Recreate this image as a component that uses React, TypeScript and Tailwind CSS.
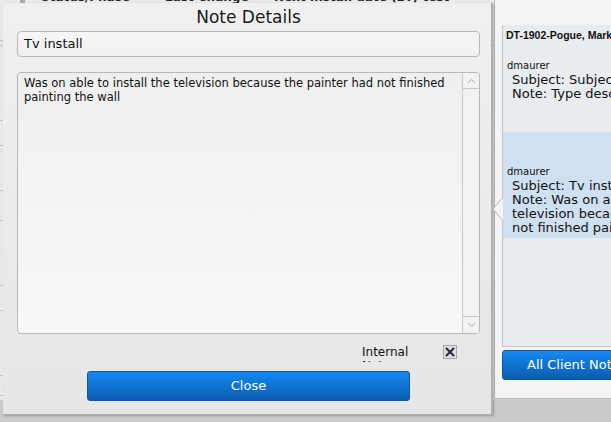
import React from "react";

const font = "font-['DejaVu_Sans','Liberation_Sans',sans-serif]";

const Chevron = ({ up }: { up?: boolean }) => (
  <svg width="9" height="6" viewBox="0 0 9 6" className="text-[#a8a8a8]">
    <path
      d={up ? "M1 5 L4.5 1.5 L8 5" : "M1 1 L4.5 4.5 L8 1"}
      fill="none"
      stroke="currentColor"
      strokeWidth="1"
    />
  </svg>
);

const BackgroundTable = () => (
  <div className="w-[494px] h-[400px] bg-[#e9e9e9] overflow-hidden">
    {/* header row peeking above the dialog */}
    <div className="h-[5px] overflow-hidden">
      <div className="flex -mt-[10px] text-[12px] leading-[14px] font-bold text-[#222] whitespace-nowrap">
        <span className="ml-[20px] w-[5px] h-[14px] bg-[#a9a9a9]" />
        <span className="w-[140px] pl-[16px]">Status/Phase</span>
        <span className="w-[105px]">Last Change</span>
        <span className="pl-[4px]">Next Install date (ET) test</span>
      </div>
    </div>
    <div className="flex flex-col">
      {[36, 5, 75, 25, 45, 30, 65, 25, 65, 20, 40].map((h, i) => (
        <div key={i} className="border-b border-[#c4c4c4]" style={{ height: h }} />
      ))}
    </div>
  </div>
);

const NotesPanel = () => (
  <div className="w-[117px] h-[399px] bg-[#f4f4f4] border-l border-[#b5b5b5] border-b border-[#c0c0c0] pl-[7px] pt-[25px] overflow-hidden">
    <div className="h-[322px] bg-[#e8ecef] border-l border-b border-[#c2c4c6] overflow-hidden whitespace-nowrap text-[#111]">
      <div className="h-[19px] pl-[3px] pt-[4px] text-[10.5px] font-bold leading-[12px] font-['Liberation_Sans',sans-serif]">
        DT-1902-Pogue, Mark
      </div>
      <div className="h-[88px] pt-[15px]">
        <div className="pl-[4px] text-[10px] leading-[14px]">dmaurer</div>
        <div className="pl-[9px] text-[13px] leading-[14px]">
          Subject: Subject
          <br />
          Note: Type description
        </div>
      </div>
      <div className="h-[106px] bg-[#cfe0f1] pt-[33px]">
        <div className="pl-[4px] text-[10px] leading-[14px]">dmaurer</div>
        <div className="pl-[9px] text-[13px] leading-[14px]">
          Subject: Tv install
          <br />
          Note: Was on able to install the
          <br />
          television because the painter had
          <br />
          not finished painting the wall
        </div>
      </div>
    </div>
    <button className="mt-[3px] w-[120px] h-[30px] rounded-[3px] border border-[#0b57a6] bg-gradient-to-b from-[#1689f1] to-[#0b5db0] text-white text-[13px] text-left pl-[24px] whitespace-nowrap">
      All Client Notes
    </button>
  </div>
);

export default function App() {
  return (
    <div className={`relative w-[611px] h-[422px] overflow-hidden bg-[#c9cbcd] ${font}`}>
      <div className="flex">
        <BackgroundTable />
        <NotesPanel />
      </div>

      {/* dialog */}
      <div className="absolute left-[3px] top-[3px] w-[490px] h-[412px] bg-gradient-to-b from-[#f0f0f0] to-[#e6e6e6] border-r-[2px] border-b border-[#b0b0b0] shadow-[1px_1px_2px_rgba(0,0,0,0.25)] pl-[14px] pr-[11px] text-[#111]">
        <div className="h-[28px] flex items-center justify-center text-[17px] leading-[20px] text-[#1a1a1a]">
          Note Details
        </div>
        <div className="h-[26px] rounded-[4px] border border-[#b8b8b8] bg-gradient-to-b from-[#f7f7f7] to-[#f0f0f0] pl-[6px] flex items-center text-[13px]">
          Tv install
        </div>
        <div className="mt-[15px] h-[262px] rounded-[4px] border border-[#b8b8b8] bg-gradient-to-b from-[#efefef] to-[#f8f8f8] flex overflow-hidden">
          <div className="flex-1 pl-[6px] pt-[3px] pr-[4px] text-[11.5px] leading-[14px]">
            Was on able to install the television because the painter had not finished painting the wall
          </div>
          <div className="w-[17px] border-l border-[#c8c8c8] flex flex-col justify-between bg-[#f2f2f2]">
            <div className="h-[16px] border-b border-[#c8c8c8] flex items-center justify-center">
              <Chevron up />
            </div>
            <div className="h-[17px] border-t border-[#c8c8c8] flex items-center justify-center">
              <Chevron />
            </div>
          </div>
        </div>
        <div className="mt-[8px] h-[20px] flex overflow-hidden">
          <div className="ml-[345px] w-[60px] pt-[3px] text-[12px] leading-[14px]">
            Internal Note
          </div>
          <div className="ml-[21px] mt-[3px] w-[14px] h-[14px] border border-[#a8a8a8] bg-[#dedede] flex items-center justify-center">
            <svg width="10" height="10" viewBox="0 0 10 10">
              <path d="M1 1 L9 9 M9 1 L1 9" stroke="#1f2b3b" strokeWidth="2" />
            </svg>
          </div>
        </div>
        <button className="mt-[9px] ml-[70px] w-[323px] h-[30px] rounded-[3px] border border-[#0b57a6] bg-gradient-to-b from-[#1689f1] to-[#0b5db0] text-white text-[13px]">
          Close
        </button>
      </div>

      {/* callout pointer of the notes panel */}
      <svg
        width="12"
        height="24"
        viewBox="0 0 12 24"
        className="absolute left-[492px] top-[197px]"
      >
        <path d="M11 0 L11 24 L1 12 Z" fill="#f6f6f6" />
        <path d="M11 0 L1 12 L11 24" fill="none" stroke="#b4b4b4" strokeWidth="1" />
      </svg>
    </div>
  );
}
